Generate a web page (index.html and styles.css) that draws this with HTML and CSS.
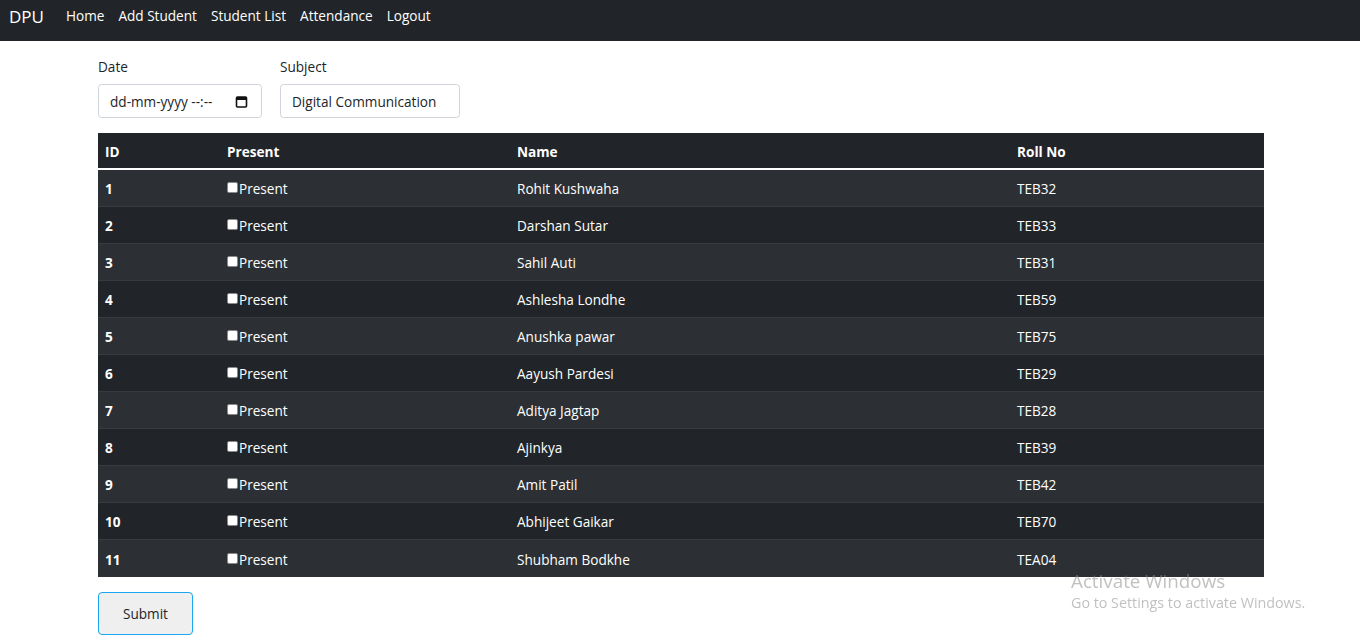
FILE: index.html
```html
<!DOCTYPE html>
<html lang="en">
<head>
<meta charset="utf-8">
<title>Attendance</title>
<link rel="stylesheet" href="styles.css">
</head>
<body>
<nav class="navbar">
  <span class="brand">DPU</span>
  <a class="nav-link" href="#">Home</a>
  <a class="nav-link" href="#">Add Student</a>
  <a class="nav-link" href="#">Student List</a>
  <a class="nav-link" href="#">Attendance</a>
  <a class="nav-link" href="#">Logout</a>
</nav>
<main class="container">
  <form class="form">
    <div class="fields">
      <div class="field">
        <label class="label">Date</label>
        <div class="input date-input"><span>dd-mm-yyyy --:--</span>
          <svg class="cal" width="13" height="13" viewBox="0 0 13 13"><rect x="1.5" y="2" width="10" height="10" rx="1" fill="none" stroke="#111" stroke-width="1.6"/><rect x="1.5" y="2" width="10" height="3" fill="#111"/></svg>
        </div>
      </div>
      <div class="field">
        <label class="label">Subject</label>
        <div class="input subject-input">Digital Communication</div>
      </div>
    </div>
    <table class="table">
      <thead>
        <tr><th class="c1">ID</th><th class="c2">Present</th><th class="c3">Name</th><th class="c4">Roll No</th></tr>
      </thead>
      <tbody>
        <tr><th>1</th><td><span class="cb"></span>Present</td><td>Rohit Kushwaha</td><td>TEB32</td></tr>
        <tr><th>2</th><td><span class="cb"></span>Present</td><td>Darshan Sutar</td><td>TEB33</td></tr>
        <tr><th>3</th><td><span class="cb"></span>Present</td><td>Sahil Auti</td><td>TEB31</td></tr>
        <tr><th>4</th><td><span class="cb"></span>Present</td><td>Ashlesha Londhe</td><td>TEB59</td></tr>
        <tr><th>5</th><td><span class="cb"></span>Present</td><td>Anushka pawar</td><td>TEB75</td></tr>
        <tr><th>6</th><td><span class="cb"></span>Present</td><td>Aayush Pardesi</td><td>TEB29</td></tr>
        <tr><th>7</th><td><span class="cb"></span>Present</td><td>Aditya Jagtap</td><td>TEB28</td></tr>
        <tr><th>8</th><td><span class="cb"></span>Present</td><td>Ajinkya</td><td>TEB39</td></tr>
        <tr><th>9</th><td><span class="cb"></span>Present</td><td>Amit Patil</td><td>TEB42</td></tr>
        <tr><th>10</th><td><span class="cb"></span>Present</td><td>Abhijeet Gaikar</td><td>TEB70</td></tr>
        <tr><th>11</th><td><span class="cb"></span>Present</td><td>Shubham Bodkhe</td><td>TEA04</td></tr>
      </tbody>
    </table>
    <button type="button" class="submit">Submit</button>
  </form>
</main>
<div class="watermark">
  <div class="wm-title">Activate Windows</div>
  <div class="wm-sub">Go to Settings to activate Windows.</div>
</div>
</body>
</html>
```
FILE: styles.css
```css
* { box-sizing: border-box; }
html, body { margin: 0; padding: 0; }
body {
  font-family: "Open Sans", "Noto Sans", sans-serif;
  font-size: 13.6px;
  color: #212529;
  background: #fff;
  width: 1360px;
  height: 643px;
  overflow: hidden;
}
.navbar {
  height: 41px;
  background: #212529;
  display: flex;
  align-items: center;
  padding: 0 0 3px 9px;
}
.brand {
  color: #fff;
  font-size: 17px;
  margin-right: 15px;
  padding-bottom: 5px;
}
.nav-link {
  color: #fff;
  text-decoration: none;
  padding: 0 7px;
  padding-bottom: 7px;
}
.container {
  width: 1166px;
  margin: 0 auto 0 98px;
}
.fields {
  display: flex;
  gap: 18px;
  padding-top: 17px;
}
.field { display: flex; flex-direction: column; }
.label { line-height: 18px; margin-bottom: 8px; }
.input {
  height: 34px;
  border: 1px solid #ced4da;
  border-radius: 3.5px;
  display: flex;
  align-items: center;
  padding: 0 11px;
  color: #212529;
}
.date-input { width: 164px; justify-content: space-between; }
.subject-input { width: 180px; }
.cal { margin-right: 2px; }
.table {
  margin-top: 15px;
  width: 1166px;
  border-collapse: collapse;
  background: #212529;
  color: #fff;
  table-layout: fixed;
}
.table th, .table td {
  text-align: left;
  padding: 2px 7px 0;
  height: 37px;
  border-bottom: 1px solid #373b3e;
  vertical-align: middle;
}
.table th { font-weight: 700; }
.table td { font-weight: 400; }
.table thead th { height: 36px; border-bottom: 2px solid #fff; }
.c1 { width: 122px; }
.c2 { width: 290px; }
.c3 { width: 500px; }
.c4 { width: 254px; }
.table tbody tr:nth-child(odd) { background: #2c3034; }
.table tbody tr:last-child th, .table tbody tr:last-child td { border-bottom: none; height: 38px; }
.cb {
  display: inline-block;
  width: 11px;
  height: 11px;
  background: #fff;
  border: 1px solid #8a8a8a;
  border-radius: 2px;
  margin-right: 1px;
  position: relative;
  top: -1px;
}
.submit {
  margin-top: 15px;
  width: 95px;
  height: 43px;
  background: #efefef;
  border: 1px solid #1aa6f0;
  border-radius: 4px;
  font-family: inherit;
  font-size: 13.6px;
  color: #212529;
}
.watermark {
  position: fixed;
  left: 1071px;
  top: 570px;
  color: rgba(140, 140, 140, 0.55);
}
.wm-title { font-size: 18.8px; line-height: 23px; }
.wm-sub { font-size: 14.3px; line-height: 20px; }
```
